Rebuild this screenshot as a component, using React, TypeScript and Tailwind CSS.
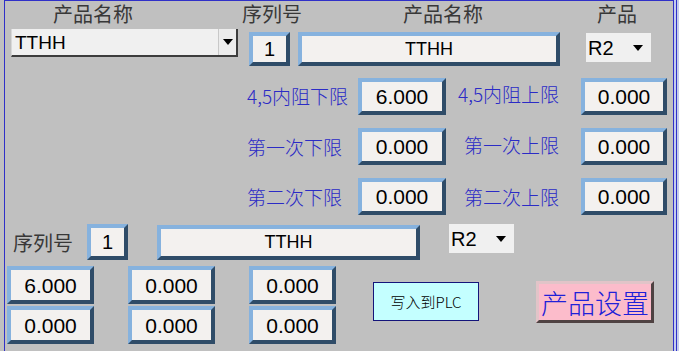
import React from 'react';

const cjk = { fontFamily: '"Noto Sans CJK SC", "Noto Sans", sans-serif' };
const arial = { fontFamily: '"Liberation Sans", Arial, sans-serif' };

function Field({ value, className = '', textClass = 'text-[21px]' }: { value: string; className?: string; textClass?: string }) {
  return (
    <div
      className={`flex items-center justify-center border-4 border-t-[#86b2de] border-l-[#86b2de] border-b-[#2f4c68] border-r-[#2f4c68] bg-[#f3f1ef] text-black ${className}`}
      style={arial}
    >
      <span className={`${textClass} leading-none`}>{value}</span>
    </div>
  );
}

function Arrow() {
  return (
    <svg width="10" height="6" viewBox="0 0 10 6">
      <path d="M0 0 L10 0 L5 6 Z" fill="#000" />
    </svg>
  );
}

function Select({ value, className = '' }: { value: string; className?: string }) {
  return (
    <div className={`flex items-center bg-[#f0f0f0] pl-[2px] pr-[8px] ${className}`} style={arial}>
      <span className="flex-1 text-[20px] leading-none text-black">{value}</span>
      <Arrow />
    </div>
  );
}

function Label({ text, className = '' }: { text: string; className?: string }) {
  return (
    <div className={`text-[19px] font-light leading-none text-[#2b2bc6] whitespace-nowrap ${className}`} style={cjk}>
      {text}
    </div>
  );
}

export default function App() {
  return (
    <div className="flex w-[679px] h-[351px] overflow-hidden bg-[#c0c0c0]">
      <div className="w-[4px] shrink-0" />
      {/* Frame */}
      <div className="w-[670px] shrink-0 h-full border-l border-t border-r border-[#3030c8] flex flex-col">
        {/* Header labels */}
        <div className="flex h-[26px] items-center text-[20px] leading-none text-[#383838]" style={cjk}>
          <div className="ml-[38px] w-[100px] text-center">产品名称</div>
          <div className="ml-[89px] w-[80px] text-center">序列号</div>
          <div className="ml-[81px] w-[100px] text-center">产品名称</div>
          <div className="ml-[89px] w-[70px] text-center">产品</div>
        </div>

        {/* Top inputs */}
        <div className="flex h-[44px] items-start">
          <div className="ml-[6px] mt-[2px] flex h-[28px] w-[227px] bg-[#f0f0f0] border-l border-l-[#d8d8d8] border-b-2 border-b-[#3c3c3c]">
            <span className="flex-1 pl-[3px] self-center text-[19px] leading-none text-black" style={arial}>
              TTHH
            </span>
            <div className="flex w-[20px] items-center justify-center border-l border-l-[#c8c8c8] border-r-2 border-r-[#3c3c3c] bg-[#ececec]">
              <Arrow />
            </div>
          </div>
          <Field value="1" className="ml-[11px] mt-[5px] w-[41px] h-[34px]" textClass="text-[20px]" />
          <Field value="TTHH" className="ml-[8px] mt-[5px] w-[262px] h-[34px]" textClass="text-[18px]" />
          <Select value="R2" className="ml-[26px] mt-[6px] w-[65px] h-[29px]" />
        </div>

        {/* Limits */}
        <div className="flex h-[50px] items-center">
          <Label text="4,5内阻下限" className="ml-[242px] w-[111px] -mt-[1px]" />
          <Field value="6.000" className="w-[88px] h-[37px]" />
          <Label text="4,5内阻上限" className="ml-[12px] w-[123px] -mt-[6px]" />
          <Field value="0.000" className="w-[86px] h-[37px] mt-[1px]" />
        </div>
        <div className="flex h-[50px] items-center">
          <Label text="第一次下限" className="ml-[242px] w-[111px] mt-[1px]" />
          <Field value="0.000" className="w-[88px] h-[37px]" />
          <Label text="第一次上限" className="ml-[18px] w-[117px] -mt-[3px]" />
          <Field value="0.000" className="w-[86px] h-[37px] mt-[1px]" />
        </div>
        <div className="flex h-[50px] items-center">
          <Label text="第二次下限" className="ml-[242px] w-[111px] mt-[1px]" />
          <Field value="0.000" className="w-[88px] h-[37px]" />
          <Label text="第二次上限" className="ml-[18px] w-[117px] mt-[1px]" />
          <Field value="0.000" className="w-[86px] h-[37px]" />
        </div>

        {/* Second product row */}
        <div className="flex h-[42px] items-center">
          <div className="ml-[8px] w-[60px] text-[20px] leading-none text-[#383838] mt-[2px]" style={cjk}>
            序列号
          </div>
          <Field value="1" className="ml-[14px] w-[41px] h-[36px]" textClass="text-[20px]" />
          <Field value="TTHH" className="ml-[29px] w-[263px] h-[35px]" textClass="text-[18px]" />
          <Select value="R2" className="ml-[29px] self-start mt-[3px] w-[65px] h-[29px]" />
        </div>

        {/* Values grid + buttons */}
        <div className="flex mt-[3px] items-start">
          <div className="ml-[2px] grid grid-cols-[87px_87px_87px] gap-x-[34px] gap-y-[2px]">
            {['6.000', '0.000', '0.000', '0.000', '0.000', '0.000'].map((v, i) => (
              <Field key={i} value={v} className="h-[38px]" />
            ))}
          </div>
          <button
            className="ml-[37px] mt-[16px] flex h-[39px] w-[106px] items-center justify-center border border-[#14147a] bg-[#c4ffff] text-[15px] font-light leading-none text-black"
            style={cjk}
          >
            写入到PLC
          </button>
          <button
            className="ml-[57px] mt-[15px] flex h-[42px] w-[118px] items-center justify-center border-[3px] border-t-[#e2c4c8] border-l-[#e2c4c8] border-b-[#4f4242] border-r-[#4f4242] bg-[#fcbccb] text-[27px] font-light leading-none text-[#2020d8]"
            style={cjk}
          >
            产品设置
          </button>
        </div>
      </div>
      {/* Right edge strip */}
      <div className="flex w-[5px] shrink-0">
        <div className="w-[2px] bg-[#c4ccec]" />
        <div className="w-[1px] bg-[#3030c8]" />
        <div className="w-[2px] bg-[#c4ccec]" />
      </div>
    </div>
  );
}
